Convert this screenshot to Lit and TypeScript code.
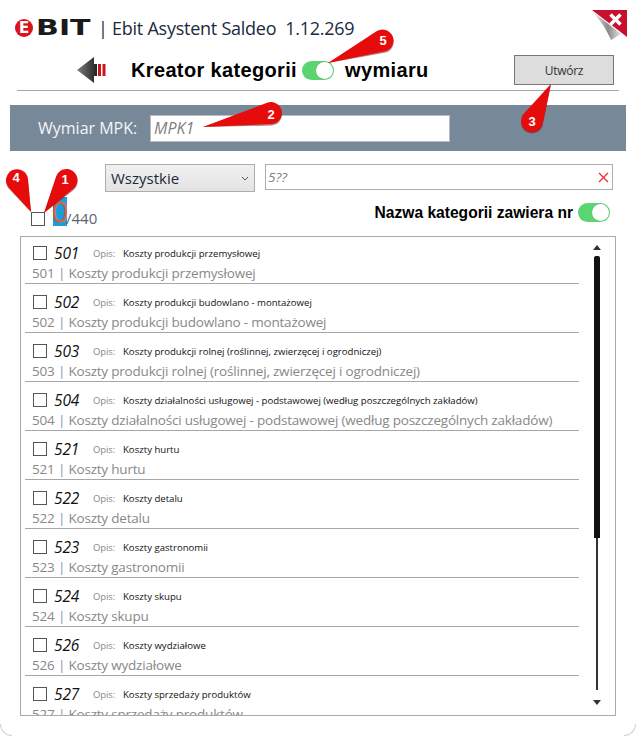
import { LitElement, html, css, svg } from "lit";
import { customElement } from "lit/decorators.js";

const rows: [string, string][] = [
  ["501", "Koszty produkcji przemysłowej"],
  ["502", "Koszty produkcji budowlano - montażowej"],
  ["503", "Koszty produkcji rolnej (roślinnej, zwierzęcej i ogrodniczej)"],
  ["504", "Koszty działalności usługowej - podstawowej (według poszczególnych zakładów)"],
  ["521", "Koszty hurtu"],
  ["522", "Koszty detalu"],
  ["523", "Koszty gastronomii"],
  ["524", "Koszty skupu"],
  ["526", "Koszty wydziałowe"],
  ["527", "Koszty sprzedaży produktów"],
];

const pins: [string, number, number, number, number, number, number][] = [
  ["1", 66.5, 180, 44, 213, 65, 179],
  ["2", 271, 113, 203, 127, 271, 114],
  ["3", 532, 121, 551, 84, 532, 121],
  ["4", 17, 180, 31, 212, 16, 177],
  ["5", 382.5, 40.5, 328, 63, 383, 40],
];

function pinPath(cx: number, cy: number, tx: number, ty: number, r: number) {
  const dx = tx - cx;
  const dy = ty - cy;
  const d = Math.hypot(dx, dy);
  const a = Math.atan2(dy, dx);
  const b = Math.acos(r / d);
  const p1 = [cx + r * Math.cos(a + b), cy + r * Math.sin(a + b)];
  const p2 = [cx + r * Math.cos(a - b), cy + r * Math.sin(a - b)];
  return `M${tx} ${ty}L${p1[0].toFixed(1)} ${p1[1].toFixed(1)}A${r} ${r} 0 1 1 ${p2[0].toFixed(1)} ${p2[1].toFixed(1)}Z`;
}

@customElement("app-root")
export class AppRoot extends LitElement {
  static styles = css`
    :host { display: block; width: 636px; height: 736px; font-family: "Open Sans", "Noto Sans", sans-serif; color: #222; }
    * { box-sizing: border-box; }
    .win { position: relative; width: 636px; height: 736px; background: #fff; overflow: hidden; display: flex; flex-direction: column; }
    .head { display: flex; align-items: center; height: 18px; margin: 19px 0 0 15px; }
    .logo-mark { width: 18px; height: 18px; border-radius: 50%; background: #d8141e; display: flex; align-items: center; justify-content: center; color: #fff; font: 700 15px "DejaVu Sans", sans-serif; flex: none; }
    .logo-text { font: 700 21px/18px "DejaVu Sans", sans-serif; color: #1a1a1a; margin-left: 3px; width: 55px; flex: none; transform: scaleX(1.43); transform-origin: left center; }
    .title { font-size: 18px; letter-spacing: -0.25px; margin-left: 7px; color: #1b2a3d; white-space: pre; }
    .row2 { display: flex; align-items: center; height: 30px; margin: 18px 0 0 77px; }
    .h1 { font: 700 20px "Liberation Sans", sans-serif; letter-spacing: 0.35px; color: #000; white-space: nowrap; }
    .toggle { display: block; width: 32px; height: 19px; border-radius: 10px; background: #5ad56f; position: relative; flex: none; }
    .toggle i { position: absolute; right: 1px; top: 1px; width: 17px; height: 17px; border-radius: 50%; background: #fff; box-shadow: 0 0 1px #597; }
    .btn { width: 100px; height: 30px; border: 1px solid #777; background: #dddddd; font-size: 12px; letter-spacing: -0.3px; display: flex; align-items: center; justify-content: center; color: #333; margin-left: auto; margin-right: 22px; }
    hr { border: 0; height: 1px; background: #a6a6a6; margin: 5px 17px 0; }
    .band { height: 46px; margin: 14px 10px 0; background: #778899; display: flex; align-items: center; padding-left: 28px; }
    .band label { width: 112px; color: #f4f6f8; font-size: 16px; }
    .band .inp { width: 300px; height: 27px; background: #fff; border: 1px solid #b5bcc4; padding-left: 3px; font-style: italic; color: #808080; font-size: 16px; line-height: 25px; }
    .filters { display: flex; margin: 13px 0 0 105px; align-items: flex-start; }
    .sel { width: 150px; height: 28px; border: 1px solid #adadad; background: linear-gradient(#f0f0f0, #e3e3e3); display: flex; align-items: center; justify-content: space-between; padding: 0 5px; font-size: 15px; color: #1b2a3d; }
    .search { margin-left: 10px; width: 348px; height: 26px; border: 1px solid #adadad; display: flex; align-items: center; justify-content: space-between; padding: 0 3px 0 2px; font-style: italic; font-size: 13.5px; color: #808080; }
    .tools { display: flex; height: 30px; margin-top: 5px; }
    .cb { width: 14px; height: 14px; border: 1px solid #555; background: #fff; flex: none; display: block; }
    .tools .cb { margin: 15px 0 0 31px; }
    .zero { margin-left: 8px; width: 14px; height: 29px; background: #1f9cd8; font-size: 28px; font-weight: 300; line-height: 29px; display: flex; justify-content: center; color: #3aa6dc; -webkit-text-stroke: 1px #e8572f; }
    .tot { font-size: 15px; color: #5a6470; margin: 11px 0 0 -1px; }
    .nm { margin-left: auto; display: flex; align-items: center; height: 19px; margin-top: 6px; margin-right: 26px; }
    .nm b { font: 700 15.6px "Liberation Sans", sans-serif; color: #000; margin-right: 5px; white-space: nowrap; }
    .list { margin: 9px 20px 0; height: 480px; border: 1px solid #a9a9a9; display: flex; overflow: hidden; }
    .items { width: 558px; padding: 0 0 0 4px; flex: none; }
    .it { height: 49px; padding-top: 7px; border-bottom: 1px solid #a6a6a6; overflow: hidden; white-space: nowrap; }
    .it:first-child { height: 47px; padding-top: 5px; }
    .it:last-child { border-bottom: 0; }
    .l1 { display: flex; align-items: center; height: 22px; padding: 0 0 0 8px; }
    .l1 em { font-size: 15.5px; color: #111; margin-left: 7px; width: 39px; letter-spacing: -0.1px; }
    .l1 small { font-size: 9.5px; color: #888; width: 30px; letter-spacing: -0.1px; }
    .l1 span { font-size: 9.6px; color: #111; }
    .l2 { font-size: 13.5px; line-height: 20px; margin-top: -1.5px; color: #888; padding-left: 7px; letter-spacing: -0.2px; }
    .l2 u { text-decoration: none; color: #7f95ae; }
    .sb { width: 36px; display: flex; flex-direction: column; align-items: center; padding: 8px 0 0; }
    .sb svg { display: block; flex: none; }
    .th { width: 6px; height: 282px; background: #111; border-radius: 2px 2px 0 0; margin-top: 6px; flex: none; }
    .tr { width: 2px; height: 152px; background: #333; flex: none; }
    .sb .dn { margin-top: 10px; }
    .ov { position: absolute; left: 0; top: 0; pointer-events: none; }
    .ov text { font: 700 13px "Liberation Sans", sans-serif; fill: #fff; text-anchor: middle; }
    .corner { position: absolute; width: 12px; height: 12px; bottom: 0; border-bottom: 1px solid #d0d0d0; }
    .corner.l { left: 0; border-left: 1px solid #d0d0d0; border-bottom-left-radius: 12px; }
    .corner.r { right: 0; border-right: 1px solid #d0d0d0; border-bottom-right-radius: 12px; }
  `;

  render() {
    return html`<div class="win">
      <div class="head">
        <span class="logo-mark">E</span><span class="logo-text">BIT</span>
        <span class="title">| Ebit Asystent Saldeo  1.12.269</span>
      </div>
      <div class="row2">
        <svg width="30" height="26" viewBox="0 0 30 26" style="flex:none">
          <defs><linearGradient id="ag" x1="0" x2="1"><stop offset="0" stop-color="#808080"/><stop offset="1" stop-color="#222"/></linearGradient></defs>
          <path d="M0 13 L17 0 V7 H20 V19 H17 V26 Z" fill="url(#ag)"/>
          <rect x="21" y="7" width="3" height="12" fill="#c8151b"/><rect x="25.5" y="7" width="3" height="12" fill="#c8151b"/>
        </svg>
        <span class="h1" style="margin-left:24px">Kreator kategorii</span>
        <span class="toggle" style="margin-left:5px"><i></i></span>
        <span class="h1" style="margin-left:11px">wymiaru</span>
        <span class="btn">Utwórz</span>
      </div>
      <hr />
      <div class="band"><label>Wymiar MPK:</label><div class="inp">MPK1</div></div>
      <div class="filters">
        <div class="sel">Wszystkie
          <svg width="8" height="5" viewBox="0 0 8 5"><path d="M1 1 L4 4 L7 1" fill="none" stroke="#555" stroke-width="1"/></svg>
        </div>
        <div class="search">5??
          <svg width="11" height="11" viewBox="0 0 11 11"><path d="M1 1 L10 10 M10 1 L1 10" stroke="#ee2a2a" stroke-width="1.3"/></svg>
        </div>
      </div>
      <div class="tools">
        <span class="cb"></span><div class="zero">0</div><div class="tot">/440</div>
        <div class="nm"><b>Nazwa kategorii zawiera nr</b><span class="toggle"><i></i></span></div>
      </div>
      <div class="list">
        <div class="items">
          ${rows.map(([n, t]) => html`<div class="it">
            <div class="l1"><span class="cb"></span><em>${n}</em><small>Opis:</small><span>${t}</span></div>
            <div class="l2">${n} <u>|</u> ${t}</div>
          </div>`)}
        </div>
        <div class="sb">
          <svg width="8" height="5" viewBox="0 0 8 5"><path d="M4 0 L8 5 H0 Z" fill="#333"/></svg>
          <div class="th"></div><div class="tr"></div>
          <svg class="dn" width="8" height="5" viewBox="0 0 8 5"><path d="M4 5 L8 0 H0 Z" fill="#333"/></svg>
        </div>
      </div>
      <span class="corner l"></span><span class="corner r"></span>
      <svg class="ov" width="636" height="736" viewBox="0 0 636 736">
        <defs>
          <linearGradient id="fold" x1="0" y1="0" x2="1" y2="0"><stop offset="0" stop-color="#f4f4f4"/><stop offset=".55" stop-color="#8a8a8a"/><stop offset="1" stop-color="#e4e4e4"/></linearGradient>
        </defs>
        <path d="M592 10 H627 V37 Z" fill="#c8102e"/>
        <path d="M592 11 L621 34 L611 40 Q604 24 592 11 Z" fill="url(#fold)"/>
        <path d="M610.5 14.5 L620.5 24.5 M620.5 14.5 L610.5 24.5" stroke="#fff" stroke-width="3.5"/>
        ${pins.map(([n, cx, cy, tx, ty, nx, ny]) => svg`
          <path d=${pinPath(cx, cy + 1.5, tx, ty, 11)} fill="#7a1010" opacity=".55"/>
          <path d=${pinPath(cx, cy, tx, ty, 11)} fill="#e60c0c"/>
          <text x=${nx} y=${ny + 4.6}>${n}</text>`)}
      </svg>
    </div>`;
  }
}
